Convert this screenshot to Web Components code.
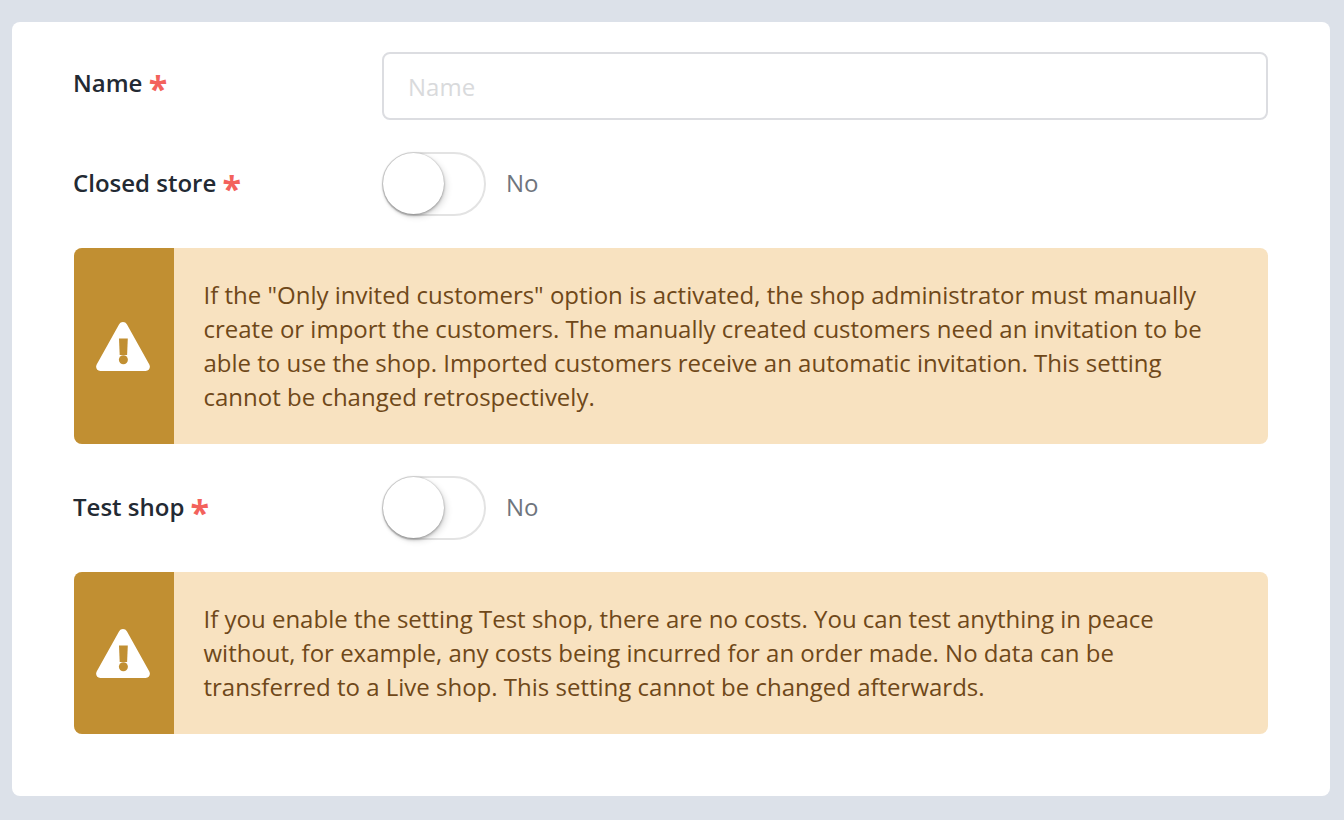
<!DOCTYPE html>
<html lang="en">
<head>
<meta charset="utf-8">
<title>Shop settings</title>
<style>
  html, body { margin: 0; height: 100%; }
  body {
    background: #dce1e9;
    font-family: "Open Sans", "Noto Sans", sans-serif;
    padding: 22px 14px 24px 12px;
    box-sizing: border-box;
    overflow: hidden;
  }
</style>
</head>
<body>
<settings-card>
  <form-row label="Name" style="--row-height:68px;--label-shift:-4px"><text-field placeholder="Name"></text-field></form-row>
  <form-row label="Closed store" style="--row-top:32px;--row-height:64px"><toggle-switch>No</toggle-switch></form-row>
  <warning-box style="--box-top:32px;--box-height:196px">If the "Only invited customers" option is activated, the shop administrator must manually<br>create or import the customers. The manually created customers need an invitation to be<br>able to use the shop. Imported customers receive an automatic invitation. This setting<br>cannot be changed retrospectively.</warning-box>
  <form-row label="Test shop" style="--row-top:32px;--row-height:64px"><toggle-switch>No</toggle-switch></form-row>
  <warning-box style="--box-top:32px;--box-height:162px">If you enable the setting Test shop, there are no costs. You can test anything in peace<br>without, for example, any costs being incurred for an order made. No data can be<br>transferred to a Live shop. This setting cannot be changed afterwards.</warning-box>
</settings-card>

<script>
const cardTmp = document.createElement('template');
cardTmp.innerHTML = `
  <style>
  :host {
      display: block;
      height: 774px;
      box-sizing: border-box;
      padding: 30px 62px;
      background: #fff;
      border-radius: 8px;
  }
  </style>
  <slot></slot>
  `;

class SettingsCard extends HTMLElement {
    connectedCallback() {
      if (!this.shadowRoot) {
        this.attachShadow({ mode: 'open' }).appendChild(cardTmp.content.cloneNode(true));
      }
    }
}

const rowTmp = document.createElement('template');
rowTmp.innerHTML = `
  <style>
  :host {
      display: flex;
      margin-top: var(--row-top, 0);
      height: var(--row-height, 64px);
      align-items: center;
  }
  .label {
      width: 308px;
      flex: none;
      font-size: 24px;
      font-weight: 600;
      color: #232a33;
      position: relative;
      left: -1px;
      top: var(--label-shift, -2px);
  }
  .star {
      color: #f3625c;
      font-size: 34px;
      font-weight: 700;
      line-height: 0;
      vertical-align: -9px;
  }
  .control { flex: 1; min-width: 0; }
  </style>
  <div class="label"><span class="text"></span> <span class="star">*</span></div>
  <div class="control"><slot></slot></div>
  `;

class FormRow extends HTMLElement {
    connectedCallback() {
      if (!this.shadowRoot) {
        const root = this.attachShadow({ mode: 'open' });
        root.appendChild(rowTmp.content.cloneNode(true));
        root.querySelector('.text').textContent = this.getAttribute('label');
      }
    }
}

const fieldTmp = document.createElement('template');
fieldTmp.innerHTML = `
  <style>
  :host { display: block; }
  input {
      display: block;
      width: 100%;
      height: 68px;
      box-sizing: border-box;
      padding: 0 24px;
      border: 2px solid #dcdde1;
      border-radius: 8px;
      background: #fff;
      font: 24px "Open Sans", "Noto Sans", sans-serif;
      outline: none;
  }
  input::placeholder { color: #d9dadc; opacity: 1; }
  </style>
  <input type="text">
  `;

class TextField extends HTMLElement {
    connectedCallback() {
      if (!this.shadowRoot) {
        const root = this.attachShadow({ mode: 'open' });
        root.appendChild(fieldTmp.content.cloneNode(true));
        root.querySelector('input').placeholder = this.getAttribute('placeholder') || '';
      }
    }
}

const toggleTmp = document.createElement('template');
toggleTmp.innerHTML = `
  <style>
  :host {
      display: flex;
      align-items: center;
      gap: 20px;
      color: #6f757d;
      font-size: 24px;
  }
  .track {
      width: 104px;
      height: 64px;
      box-sizing: border-box;
      flex: none;
      border: 2px solid #e3e3e3;
      border-radius: 32px;
      background: #fff;
      position: relative;
  }
  .knob {
      position: absolute;
      left: -1px;
      top: -1px;
      width: 61px;
      height: 61px;
      border-radius: 50%;
      background: #fff;
      box-shadow: 0 2px 3px rgba(0,0,0,.22), 3px 3px 6px rgba(0,0,0,.12), 0 0 2px rgba(0,0,0,.28);
  }
  .text { position: relative; top: -2px; }
  </style>
  <div class="track"><div class="knob"></div></div>
  <span class="text"><slot></slot></span>
  `;

class ToggleSwitch extends HTMLElement {
    connectedCallback() {
      if (!this.shadowRoot) {
        this.attachShadow({ mode: 'open' }).appendChild(toggleTmp.content.cloneNode(true));
      }
    }
}

const warnTmp = document.createElement('template');
warnTmp.innerHTML = `
  <style>
  :host {
      display: flex;
      margin-top: var(--box-top, 0);
      height: var(--box-height, 160px);
      border-radius: 8px;
      overflow: hidden;
      background: #f8e2c0;
      color: #6f4819;
      font-size: 24px;
      line-height: 34px;
  }
  .side {
      width: 100px;
      flex: none;
      background: #c18f32;
      display: flex;
      align-items: center;
      justify-content: center;
      padding-right: 2px;
      box-sizing: border-box;
  }
  svg { display: block; width: 54px; height: 49px; }
  .body {
      flex: 1;
      padding: 30px 30px 30px 29.5px;
      white-space: nowrap;
  }
  </style>
  <div class="side">
    <svg viewBox="0 0 54 49" aria-hidden="true">
      <path fill="#fff" d="M23 2.500c1.800-3.300 6.200-3.300 8 0l22.300 40c1.600 3-.2 6.500-3.600 6.500H4.300c-3.400 0-5.200-3.500-3.600-6.500z"/>
      <path fill="#c18f32" d="M23 16.500h8.800l-.7 16.500h-7.400z"/>
      <circle fill="#c18f32" cx="27.400" cy="37.700" r="4.500"/>
    </svg>
  </div>
  <div class="body"><slot></slot></div>
  `;

class WarningBox extends HTMLElement {
    connectedCallback() {
      if (!this.shadowRoot) {
        this.attachShadow({ mode: 'open' }).appendChild(warnTmp.content.cloneNode(true));
      }
    }
}

customElements.define('settings-card', SettingsCard);
customElements.define('form-row', FormRow);
customElements.define('text-field', TextField);
customElements.define('toggle-switch', ToggleSwitch);
customElements.define('warning-box', WarningBox);
</script>
</body>
</html>
